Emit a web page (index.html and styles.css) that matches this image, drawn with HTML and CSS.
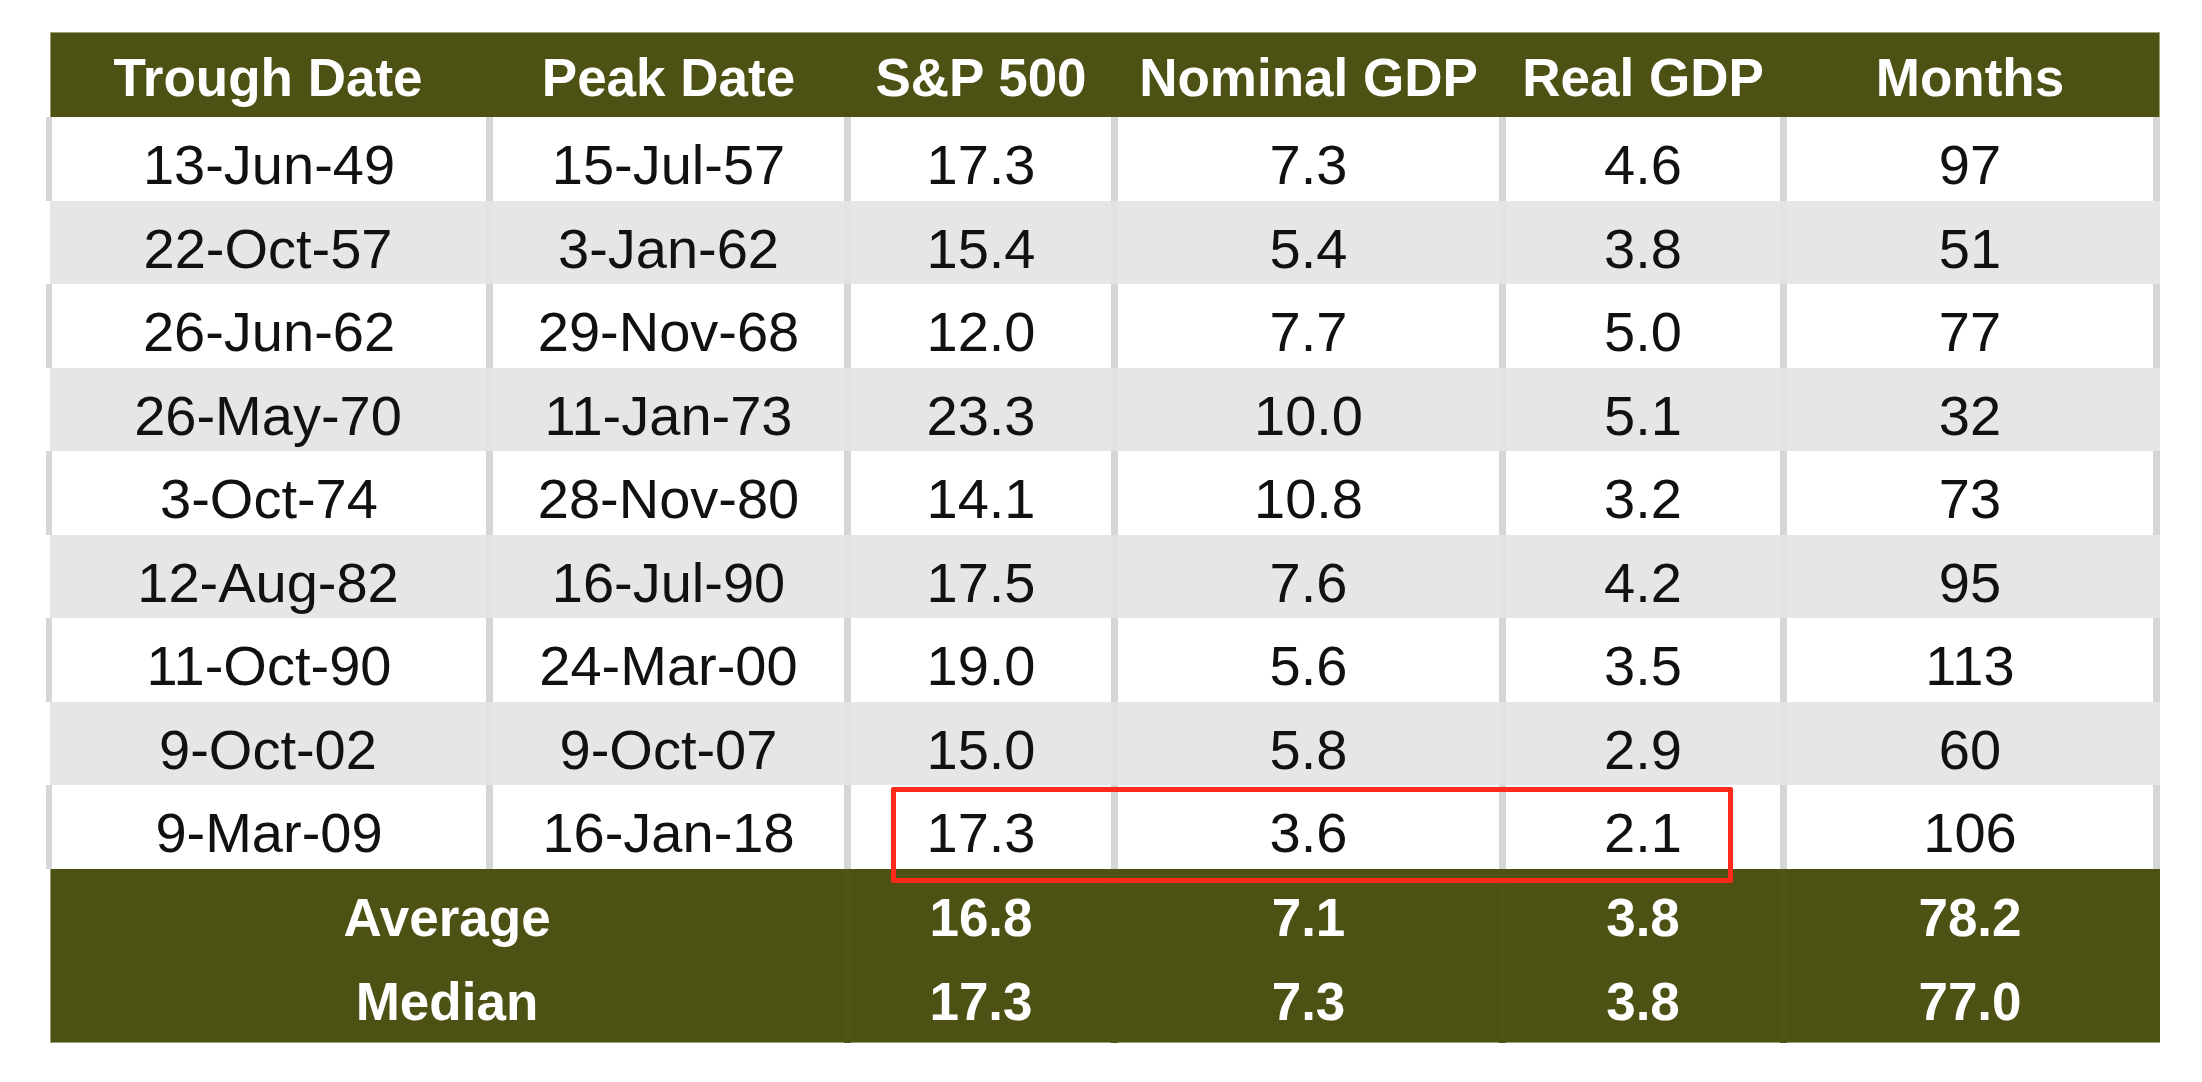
FILE: index.html
```html
<!DOCTYPE html>
<html lang="en">
<head>
<meta charset="utf-8">
<title>Expansions table</title>
<link rel="stylesheet" href="styles.css">
</head>
<body>
<div class="table">
  <div class="row head">
    <div class="c">Trough Date</div>
    <div class="c">Peak Date</div>
    <div class="c">S&amp;P 500</div>
    <div class="c">Nominal GDP</div>
    <div class="c">Real GDP</div>
    <div class="c">Months</div>
  </div>
  <div class="row data white">
    <div class="c">13-Jun-49</div><div class="c">15-Jul-57</div><div class="c">17.3</div><div class="c">7.3</div><div class="c">4.6</div><div class="c">97</div>
  </div>
  <div class="row data grey">
    <div class="c">22-Oct-57</div><div class="c">3-Jan-62</div><div class="c">15.4</div><div class="c">5.4</div><div class="c">3.8</div><div class="c">51</div>
  </div>
  <div class="row data white">
    <div class="c">26-Jun-62</div><div class="c">29-Nov-68</div><div class="c">12.0</div><div class="c">7.7</div><div class="c">5.0</div><div class="c">77</div>
  </div>
  <div class="row data grey">
    <div class="c">26-May-70</div><div class="c">11-Jan-73</div><div class="c">23.3</div><div class="c">10.0</div><div class="c">5.1</div><div class="c">32</div>
  </div>
  <div class="row data white">
    <div class="c">3-Oct-74</div><div class="c">28-Nov-80</div><div class="c">14.1</div><div class="c">10.8</div><div class="c">3.2</div><div class="c">73</div>
  </div>
  <div class="row data grey">
    <div class="c">12-Aug-82</div><div class="c">16-Jul-90</div><div class="c">17.5</div><div class="c">7.6</div><div class="c">4.2</div><div class="c">95</div>
  </div>
  <div class="row data white">
    <div class="c">11-Oct-90</div><div class="c">24-Mar-00</div><div class="c">19.0</div><div class="c">5.6</div><div class="c">3.5</div><div class="c">113</div>
  </div>
  <div class="row data grey">
    <div class="c">9-Oct-02</div><div class="c">9-Oct-07</div><div class="c">15.0</div><div class="c">5.8</div><div class="c">2.9</div><div class="c">60</div>
  </div>
  <div class="row data white">
    <div class="c">9-Mar-09</div><div class="c">16-Jan-18</div><div class="c">17.3</div><div class="c">3.6</div><div class="c">2.1</div><div class="c">106</div>
  </div>
  <div class="foot">
    <div class="frow first">
      <div class="c label">Average</div><div class="c">16.8</div><div class="c">7.1</div><div class="c">3.8</div><div class="c">78.2</div>
    </div>
    <div class="frow second">
      <div class="c label">Median</div><div class="c">17.3</div><div class="c">7.3</div><div class="c">3.8</div><div class="c">77.0</div>
    </div>
  </div>
  <div class="highlight"></div>
</div>
</body>
</html>
```

FILE: styles.css
```css
html, body {
  margin: 0;
  padding: 0;
  background: #ffffff;
  overflow: hidden;
}

body {
  font-family: "Liberation Sans", Arial, sans-serif;
  color: #111111;
}

.table {
  position: relative;
  width: 2110px;
  margin: 32px 0 0 50px;
}

.row {
  display: grid;
  grid-template-columns: 436px 358px 267px 388px 281px 380px;
}

.c {
  display: flex;
  align-items: center;
  justify-content: center;
  white-space: nowrap;
  box-sizing: border-box;
}

.row .c + .c {
  border-left: 7px solid transparent;
}

.row .c:last-child {
  border-right: 7px solid transparent;
}

.head {
  height: 85px;
  background: #4e5114;
  box-shadow: inset 0 1px 0 #9c9e74, inset 1px 0 0 #9c9e74, inset -1px 0 0 #9c9e74;
}

.head .c {
  color: #ffffff;
  font-weight: bold;
  font-size: 53px;
  padding-top: 6px;
}

.data {
  height: 83.5px;
}

.data .c {
  font-size: 56px;
  padding-top: 12px;
}

.white {
  background: #ffffff;
  box-shadow: -4px 0 0 #d6d6d6;
}

.white .c:first-child {
  border-left: 2px solid #d6d6d6;
}

.white .c + .c {
  border-left-color: #d6d6d6;
}

.white .c:last-child {
  border-right-color: #d6d6d6;
}

.grey {
  background: #e6e6e6;
}

.grey .c + .c {
  border-left-color: #e3e3e3;
}

.foot {
  background: #4e5114;
  box-shadow: inset 1px 0 0 #9c9e74, inset 0 -1px 0 #9c9e74;
}

.frow {
  display: grid;
  grid-template-columns: 794px 267px 388px 281px 380px;
  height: 87px;
}

.frow .c {
  color: #ffffff;
  font-weight: bold;
  font-size: 53px;
}

.frow .c + .c {
  border-left: 7px solid #505316;
}

.frow .c:last-child {
  border-right: 7px solid transparent;
}

.frow.first .c {
  padding-top: 10px;
}

.frow.second .c {
  padding-top: 4px;
}

.highlight {
  position: absolute;
  left: 841px;
  top: 755px;
  width: 842px;
  height: 96px;
  box-sizing: border-box;
  border: 5px solid #fd2a1c;
  border-radius: 2px;
}
```
